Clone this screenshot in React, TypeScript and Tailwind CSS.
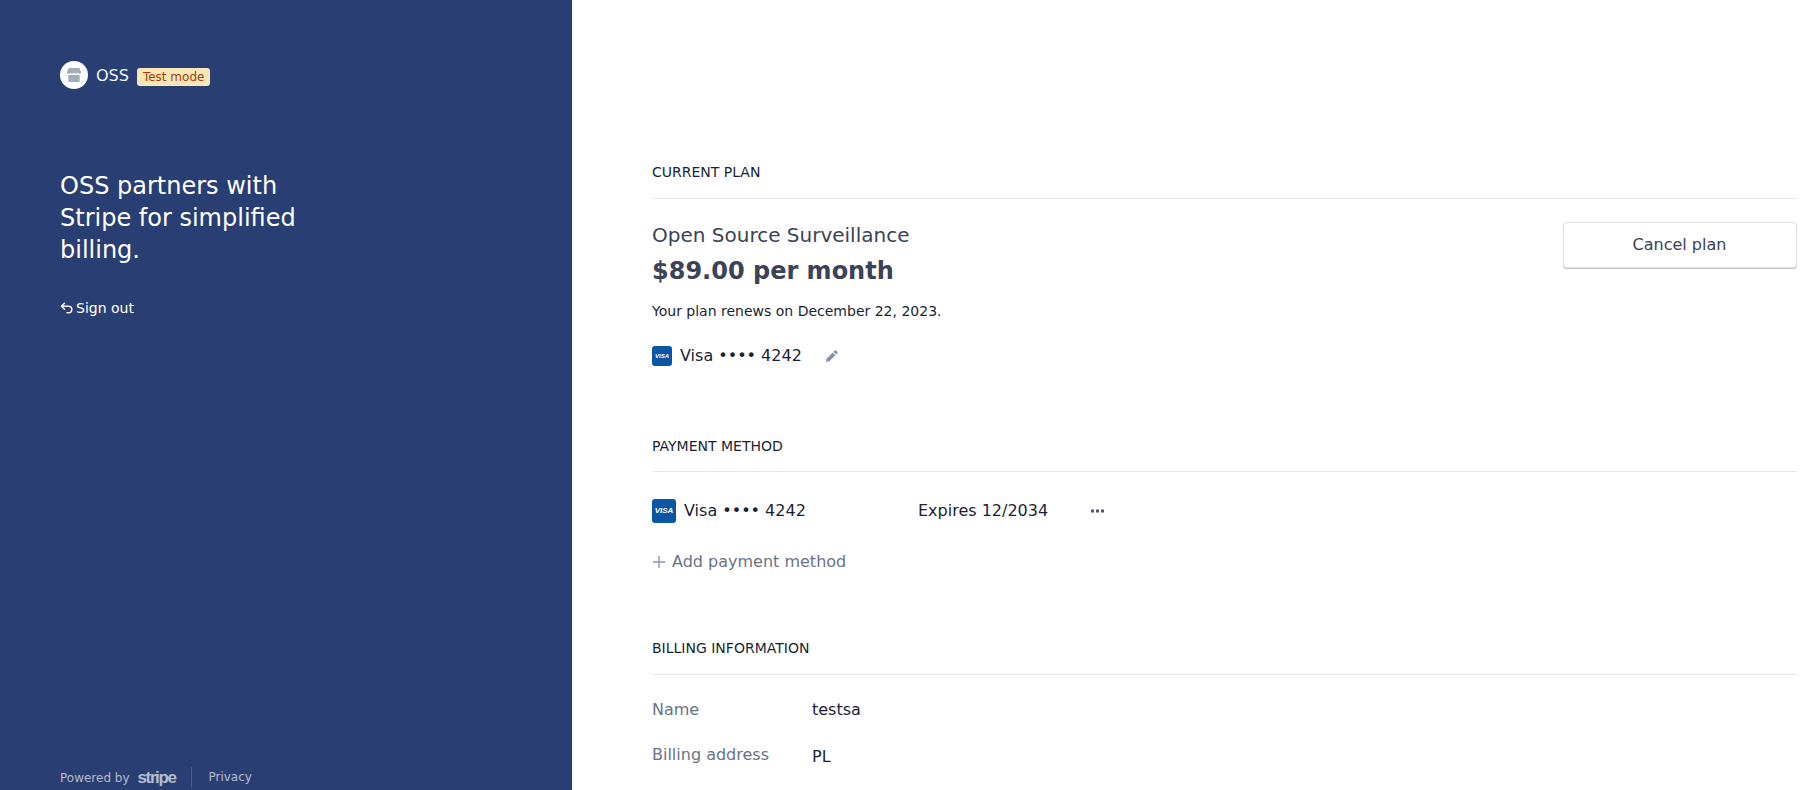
import React from "react";

const Visa = ({ size }: { size: "s" | "l" }) => (
  <span className={size === "s" ? "flex h-5 w-5 items-center justify-center rounded-[3px] bg-[#0a55a4]" : "flex h-6 w-6 items-center justify-center rounded-[3px] bg-[#0a55a4]"}>
    <span className={size === "s" ? "font-['Liberation_Sans',sans-serif] text-[6px] leading-none font-bold italic text-white" : "font-['Liberation_Sans',sans-serif] text-[8px] leading-none font-bold italic text-white"}>VISA</span>
  </span>
);

const Heading = ({ children, low }: { children: React.ReactNode; low?: boolean }) => (
  <div className={low ? "flex h-[40px] items-start border-b border-[#e3e8ee] pt-[4px] text-[14px] leading-5 text-[#1a1f36]" : "flex h-[40px] items-start border-b border-[#e3e8ee] pt-[3px] text-[14px] leading-5 text-[#1a1f36]"}>{children}</div>
);

export default function App() {
  return (
    <div className="flex h-[790px] w-[1815px] overflow-hidden bg-white font-['DejaVu_Sans',sans-serif]">
      <aside className="flex h-full w-[572px] shrink-0 flex-col bg-[#293e72] pl-[60px]">
        <div className="mt-[61px] flex h-[28px] items-center">
          <span className="flex h-[28px] w-[28px] items-center justify-center rounded-full bg-white">
            <svg width="16" height="16" viewBox="0 0 16 16" fill="#a3acb9">
              <path d="M2.6 1h10.8l1.6 4.2c0 1-.8 1.6-1.7 1.6-.8 0-1.6-.5-1.7-1.3-.2.8-.9 1.3-1.7 1.3s-1.6-.5-1.9-1.3c-.3.8-1.1 1.3-1.9 1.3s-1.5-.5-1.7-1.3c-.1.8-.9 1.3-1.7 1.3C2 6.800 1 6.200 1 5.200z" />
              <path d="M2.300 7.900h11.400V14a1 1 0 0 1-1 1H3.300a1 1 0 0 1-1-1z" />
            </svg>
          </span>
          <span className="ml-[8px] mt-[1px] text-[16px] leading-5 text-[#f0f6ff]">OSS</span>
          <span className="ml-[8px] mt-[3px] flex h-[18px] items-center rounded-[3px] bg-[#fbe6b8] px-[6px] text-[12px] leading-4 text-[#a34005]">Test mode</span>
        </div>
        <h1 className="mt-[81px] w-[260px] text-[24px] leading-[32px] font-normal text-white">
          OSS partners with Stripe for simplified billing.
        </h1>
        <div className="mt-[32px] flex h-5 items-center text-[14px] leading-5 text-white">
          <svg width="14" height="14" viewBox="0 0 14 14" fill="none" stroke="white" strokeWidth="1.500" strokeLinecap="round" strokeLinejoin="round" className="mr-[2px]">
            <path d="M4.500 2.200 1.500 5.200l3 3" />
            <path d="M1.800 5.200h6.700a3.300 3.300 0 0 1 0 6.600H7" />
          </svg>
          <span>Sign out</span>
        </div>
        <footer className="mt-auto mb-[1px] flex h-[24px] items-center text-[12px] leading-4 text-[#b4bdd0]">
          <span className="mt-[2px]">Powered by</span>
          <span className="ml-[8px] mt-[1px] font-['Liberation_Sans',sans-serif] text-[17px] leading-4 font-bold tracking-[-1.4px] text-[#b4bdd0]">stripe</span>
          <span className="ml-[16px] h-[21px] w-px bg-[#4a5d8c]" />
          <span className="ml-[16px]">Privacy</span>
        </footer>
      </aside>

      <main className="flex min-w-0 flex-1 flex-col pl-[80px] pr-[18px] pt-[159px]">
        <Heading>CURRENT PLAN</Heading>
        <div className="flex items-start justify-between pt-[22px]">
          <div>
            <div className="text-[20px] leading-[28px] text-[#3c4257]">Open Source Surveillance</div>
            <div className="mt-[6px] text-[24px] leading-[32px] font-bold text-[#3c4257]">$89.00 per month</div>
            <div className="mt-[14px] text-[14px] leading-5 text-[#1a1f36]">Your plan renews on December 22, 2023.</div>
            <div className="mt-[23px] flex h-6 items-center text-[16px] leading-6 text-[#1a1f36]">
              <Visa size="s" />
              <span className="ml-2">Visa •••• 4242</span>
              <svg width="14" height="14" viewBox="0 0 14 14" fill="#8792a2" className="ml-[23px]">
                <path d="M9.700 1.600a1 1 0 0 1 1.400 0l1.300 1.300a1 1 0 0 1 0 1.400l-1.200 1.200-2.700-2.700zM7.700 3.600l2.700 2.700-6 6-3.400.7.700-3.400z" />
              </svg>
            </div>
          </div>
          <button className="mt-px mr-[0.5px] h-[46px] w-[234px] rounded-[4px] border border-[#e0e2e7] bg-white text-[16px] leading-6 text-[#3c4257] shadow-[0_1px_1px_rgba(60,66,87,0.35)]">
            Cancel plan
          </button>
        </div>

        <div className="mt-[64px]"><Heading low>PAYMENT METHOD</Heading></div>
        <div className="mt-[27px] flex h-6 items-center text-[16px] leading-6 text-[#1a1f36]">
          <span className="flex w-[266px] items-center">
            <Visa size="l" />
            <span className="ml-2">Visa •••• 4242</span>
          </span>
          <span className="w-[173px]">Expires 12/2034</span>
          <svg width="13" height="4" viewBox="0 0 13 4" fill="#4f566b">
            <rect x="0" y="0.500" width="3" height="3" />
            <rect x="5" y="0.500" width="3" height="3" />
            <rect x="10" y="0.500" width="3" height="3" />
          </svg>
        </div>
        <div className="mt-[27px] flex h-6 items-center text-[16px] leading-6 text-[#697386]">
          <svg width="14" height="14" viewBox="0 0 14 14" stroke="#8792a2" strokeWidth="1.300" fill="none">
            <path d="M7 1v12M1 7h12" />
          </svg>
          <span className="ml-[6px]">Add payment method</span>
        </div>

        <div className="mt-[61px]"><Heading>BILLING INFORMATION</Heading></div>
        <div className="mt-[23px] flex h-6 items-center text-[16px] leading-6">
          <span className="w-[160px] text-[#697386]">Name</span>
          <span className="text-[#1a1f36]">testsa</span>
        </div>
        <div className="mt-[22px] flex h-6 items-center text-[16px] leading-6">
          <span className="mb-[2px] w-[160px] text-[#697386]">Billing address</span>
          <span className="mt-[1px] text-[#1a1f36]">PL</span>
        </div>
      </main>
    </div>
  );
}
